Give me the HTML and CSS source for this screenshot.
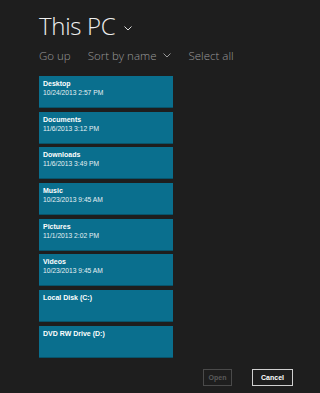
FILE: index.html
```html
<!DOCTYPE html>
<html lang="en">
<head>
  <meta charset="UTF-8">
  <meta name="viewport" content="width=device-width, initial-scale=1.0">
  <title>This PC</title>
  <link rel="stylesheet" href="styles.css">
</head>
<body>
  <div class="picker">
    <div class="title">
      <span>This PC</span>
      <svg class="chev-big" width="8" height="5" viewBox="0 0 8 5"><path d="M0.5 0.5 L4 4 L7.5 0.5" fill="none" stroke="#ddd" stroke-width="1"/></svg>
    </div>
    <div class="toolbar">
      <span class="cmd">Go up</span>
      <span class="cmd">Sort by name
        <svg class="chev" width="8" height="5" viewBox="0 0 8 5"><path d="M0.5 0.5 L4 4 L7.5 0.5" fill="none" stroke="#999" stroke-width="1"/></svg>
      </span>
      <span class="cmd">Select all</span>
    </div>
    <div class="tiles">
      <div class="tile"><div class="name">Desktop</div><div class="date">10/24/2013 2:57 PM</div></div>
      <div class="tile"><div class="name">Documents</div><div class="date">11/6/2013 3:12 PM</div></div>
      <div class="tile"><div class="name">Downloads</div><div class="date">11/6/2013 3:49 PM</div></div>
      <div class="tile"><div class="name">Music</div><div class="date">10/23/2013 9:45 AM</div></div>
      <div class="tile"><div class="name">Pictures</div><div class="date">11/1/2013 2:02 PM</div></div>
      <div class="tile"><div class="name">Videos</div><div class="date">10/23/2013 9:45 AM</div></div>
      <div class="tile"><div class="name">Local Disk (C:)</div></div>
      <div class="tile"><div class="name">DVD RW Drive (D:)</div></div>
    </div>
  </div>
  <div class="actions">
    <button class="btn disabled">Open</button>
    <button class="btn">Cancel</button>
  </div>
</body>
</html>
```

FILE: styles.css
```css
body {
  margin: 0;
  background-color: #1e1e1e;
  color: #fff;
  font-family: "Open Sans", "Noto Sans", sans-serif;
  width: 320px;
  height: 393px;
  overflow: hidden;
}
.picker {
  padding: 10px 0 0 39px;
}
.title {
  display: flex;
  align-items: center;
  height: 32px;
}
.title span {
  font-size: 24px;
  font-weight: 300;
  line-height: 32px;
  letter-spacing: -0.3px;
  color: #eee;
}
.chev-big {
  margin: 4px 0 0 9px;
}
.toolbar {
  display: flex;
  align-items: center;
  height: 28px;
  margin-top: -1px;
}
.cmd {
  font-size: 11.5px;
  font-weight: 300;
  color: #9a9a9a;
  margin-right: 17px;
  display: flex;
  align-items: center;
}
.chev {
  margin: 1px 0 0 7px;
}
.tiles {
  margin-top: 7px;
  display: flex;
  flex-direction: column;
  gap: 3.7px;
}
.tile {
  width: 134px;
  height: 32px;
  background-color: #0a6f8e;
  border-bottom: 1px solid #08546b;
  padding: 3px 0 0 4px;
  box-sizing: border-box;
  font-family: "Liberation Sans", Arial, sans-serif;
}
.tile .name {
  font-size: 7px;
  font-weight: 700;
  line-height: 9px;
}
.tile .date {
  font-size: 6.7px;
  line-height: 9px;
  color: #e6f0f3;
}
.actions {
  position: absolute;
  top: 369px;
  left: 203px;
  display: flex;
  gap: 20px;
}
.btn {
  height: 17px;
  font-family: "Liberation Sans", Arial, sans-serif;
  font-size: 7px;
  font-weight: 700;
  background: #1e1e1e;
  color: #fff;
  border: 1.5px solid #d0d0d0;
  padding: 0;
  width: 41px;
}
.btn.disabled {
  width: 29px;
  color: #5a5a5a;
  border: 1.5px solid #4a4a4a;
}
```
